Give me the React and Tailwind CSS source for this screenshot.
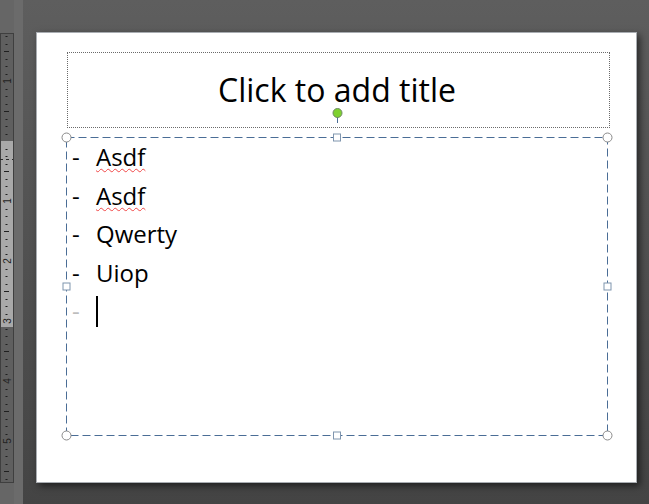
import React from 'react';

const font = { fontFamily: '"Open Sans", "Liberation Sans", sans-serif' };

// Vertical ruler: zero sits at the top margin, one inch = 60px
function Ruler() {
  const ticks = [];
  for (let y = 141 - 7.5 * 14; y < 482; y += 7.5) {
    const k = Math.round((y - 141) / 7.5);
    if (k % 8 === 0) continue;
    const long = k % 4 === 0;
    ticks.push(
      <rect key={k} x={long ? 4 : 5.5} y={Math.round(y - 33)} width={long ? 5 : 2} height={1} fill="#1f1f1f" />
    );
  }
  const nums = [
    { n: '1', y: 81 },
    { n: '1', y: 201 },
    { n: '2', y: 261 },
    { n: '3', y: 321 },
    { n: '4', y: 381 },
    { n: '5', y: 441 },
  ];
  return (
    <svg width="14" height="450" viewBox="0 0 14 450" className="block">
      <rect x="0" y="0" width="13" height="449" fill="#5f5f5f" />
      <rect x="0" y="108" width="13" height="186" fill="#a9a9a9" />
      <rect x="0.5" y="0.5" width="13" height="449" fill="none" stroke="#3f3f3f" />
      {ticks}
      {nums.map((d, i) => (
        <text
          key={i}
          x="0"
          y="0"
          fontSize="10"
          fill="#1f1f1f"
          textAnchor="middle"
          fontFamily="Liberation Sans, sans-serif"
          transform={`translate(10.5 ${d.y - 33}) rotate(-90)`}
        >
          {d.n}
        </text>
      ))}
      <line x1="0" y1="126.5" x2="13" y2="126.5" stroke="#2a2a2a" strokeDasharray="3 3" />
    </svg>
  );
}

// Selection frame, handles and rotation knob drawn over the slide
function SelectionOverlay() {
  const sq = [
    [301, 105.5],
    [30.5, 254.5],
    [571.5, 254.5],
    [301, 403.5],
  ];
  const ci = [
    [30.5, 105.5],
    [571.5, 105.5],
    [30.5, 403.5],
    [571.5, 403.5],
  ];
  return (
    <svg
      className="absolute -left-[1px] -top-[1px] pointer-events-none"
      width="601"
      height="451"
      viewBox="0 0 601 451"
    >
      <rect x="30.5" y="105.5" width="541" height="298" fill="none" stroke="#4a6d96" strokeDasharray="8 4" />
      <line x1="301.5" y1="84" x2="301.5" y2="91" stroke="#4a6d96" />
      <circle cx="301.5" cy="81" r="4.5" fill="#7ed12f" stroke="#6f8a63" />
      {ci.map(([x, y], i) => (
        <circle key={i} cx={x} cy={y} r="4.5" fill="#fff" stroke="#8a8a8a" />
      ))}
      {sq.map(([x, y], i) => (
        <rect key={i} x={x - 3.5} y={y - 3.5} width="7" height="7" fill="#fff" stroke="#7f95ae" />
      ))}
    </svg>
  );
}

const items = ['Asdf', 'Asdf', 'Qwerty', 'Uiop'];
const spelled = { Asdf: true };

export default function App() {
  return (
    <div className="w-[649px] h-[504px] overflow-hidden flex bg-[#666666]" style={font}>
      {/* ruler column */}
      <div className="w-[14px] pt-[33px] shrink-0">
        <Ruler />
      </div>
      <div className="w-[9px] shrink-0 bg-[#6b6b6b]" />

      {/* workspace */}
      <div className="flex-1 pl-[13px] pt-[32px] bg-gradient-to-b from-[#5e5e5e] to-[#444444]">
        <div className="relative w-[601px] h-[451px] bg-white border border-[#a9adb2] shadow-[3px_3px_7px_rgba(0,0,0,0.55)] pl-[30px] pt-[19px]">
          {/* title placeholder */}
          <div className="w-[543px] h-[76px] border border-dotted border-[#6a6a6a] flex items-center justify-center pb-[1px] pr-[3px]">
            <span className="text-[32px] text-black leading-normal">Click to add title</span>
          </div>

          {/* content placeholder */}
          <div className="-ml-[1px] mt-[9px] w-[542px] h-[299px] pl-[5px] pt-[1px] text-[24px] text-black leading-[38.5px]">
            {items.map((t, i) => (
              <div key={i} className="flex">
                <span className="w-[25px] pl-[1px]">-</span>
                <span
                  className={
                    spelled[t]
                      ? 'underline decoration-wavy decoration-[#f04848] decoration-1 underline-offset-[2px]'
                      : ''
                  }
                >
                  {t}
                </span>
              </div>
            ))}
            <div className="flex items-center h-[38.5px]">
              <span className="w-[25px] pl-[1px] text-[#bdbdbd]">-</span>
              <span className="inline-block w-[2px] h-[31px] bg-black" />
            </div>
          </div>

          <SelectionOverlay />
        </div>
      </div>
    </div>
  );
}
